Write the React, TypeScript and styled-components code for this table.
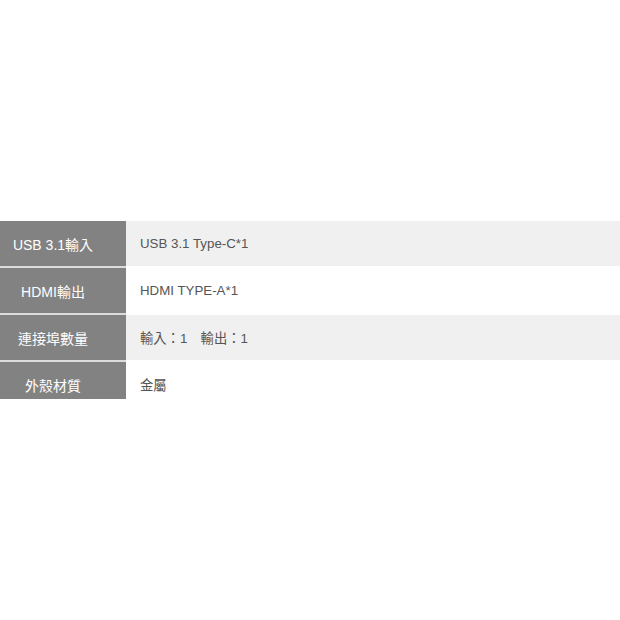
import styled, { createGlobalStyle } from 'styled-components'

const GlobalStyle = createGlobalStyle`
  html, body {
    margin: 0;
    padding: 0;
    background: #fff;
    font-family: 'Liberation Sans', Arial, 'Noto Sans CJK TC', sans-serif;
  }
`

const Page = styled.div`
  width: 620px;
  height: 620px;
  padding-top: 221px;
  box-sizing: border-box;
`

const SpecTable = styled.div`
  width: 100%;
  height: 178px;
  overflow: hidden;
`

const Row = styled.div<{ shaded?: boolean }>`
  display: grid;
  grid-template-columns: 126px 1fr;
  height: 47px;
  background: ${({ shaded }) => (shaded ? '#f0f0f0' : '#fff')};
  border-bottom: 2px solid #fff;
  box-sizing: border-box;
`

const Label = styled.div`
  display: flex;
  align-items: center;
  justify-content: center;
  padding-right: 20px;
  background: #828282;
  color: #fff;
  font-size: 14px;
  border-bottom: 2px solid #dcdcdc;
  margin-bottom: -2px;
`

const Value = styled.div`
  display: flex;
  align-items: center;
  padding-left: 14px;
  color: #555;
  font-size: 13.3px;
`

const specs = [
  { label: 'USB 3.1輸入', value: 'USB 3.1 Type-C*1' },
  { label: 'HDMI輸出', value: 'HDMI TYPE-A*1' },
  { label: '連接埠數量', value: '輸入：1\u3000輸出：1' },
  { label: '外殼材質', value: '金屬' },
]

export default function App() {
  return (
    <>
      <GlobalStyle />
      <Page>
        <SpecTable>
          {specs.map((s, i) => (
            <Row key={s.label} shaded={i % 2 === 0}>
              <Label>{s.label}</Label>
              <Value>{s.value}</Value>
            </Row>
          ))}
        </SpecTable>
      </Page>
    </>
  )
}
